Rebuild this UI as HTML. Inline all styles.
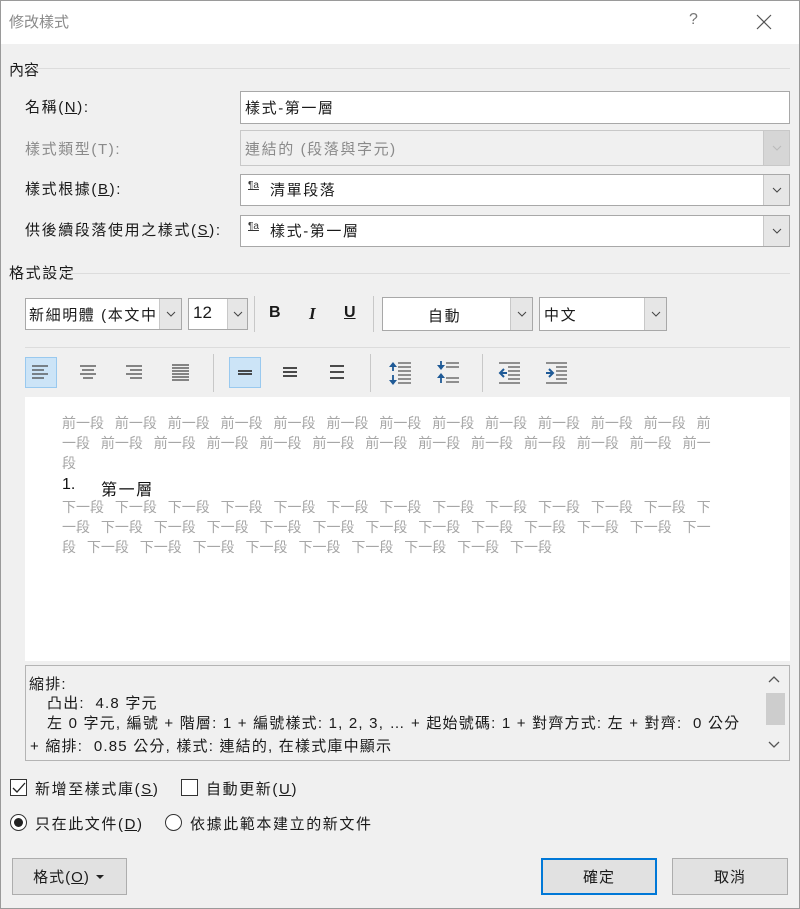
<!DOCTYPE html>
<html><head><meta charset="utf-8">
<style>
*{box-sizing:border-box;margin:0;padding:0}
body{width:800px;height:909px;background:#f0f0f0;font-family:"Liberation Sans","Noto Sans CJK TC",sans-serif;font-size:15px;color:#1a1a1a;position:relative;overflow:hidden}
.a{position:absolute;white-space:nowrap}
.ls{letter-spacing:1.6px}
.frame{position:absolute;left:0;top:0;width:800px;height:909px;border:1px solid #9a9a9a}
.title{position:absolute;left:1px;top:1px;width:798px;height:43px;background:#fff}
.line{position:absolute;height:1px;background:#dcdcdc}
.box{position:absolute;background:#fff;border:1px solid #a8a8a8}
.dd{position:absolute;top:0;right:0;bottom:0;width:26px;background:#e6e6e6;border-left:1px solid #c8c8c8;display:flex;align-items:center;justify-content:center}
.lbl{position:absolute;left:25px;line-height:20px;letter-spacing:1.6px;white-space:nowrap}
.u{text-decoration:underline}
.pv{font-size:14px;color:#a6a6a6;word-spacing:7px;line-height:20px}
.sep{position:absolute;width:1px;background:#c8c8c8}
.btn{position:absolute;background:#e1e1e1;border:1px solid #adadad;display:flex;align-items:center;justify-content:center;letter-spacing:1px}
.hl{position:absolute;background:#cce4f7;border:1px solid #99c9ef}
.ds{font-size:15px;letter-spacing:1.2px}
</style></head><body>
<div class="frame"></div>
<div class="title"></div>
<div class="a" style="left:9px;top:11px;color:#8a8a8a;font-size:15px">修改樣式</div>
<div class="a" style="left:689px;top:11px;color:#777;font-size:16px">?</div>
<svg class="a" style="left:756px;top:14px" width="16" height="16"><path d="M1 1L15 15M15 1L1 15" stroke="#555" stroke-width="1.2"/></svg>

<div class="a" style="left:9px;top:59px">內容</div>
<div class="line" style="left:36px;top:68px;width:754px"></div>

<div class="lbl" style="top:98px">名稱(<span class="u">N</span>):</div>
<div class="box" style="left:240px;top:91px;width:550px;height:33px"></div>
<div class="a ls" style="left:245px;top:97px">樣式-第一層</div>

<div class="lbl" style="top:140px;color:#8a8a8a">樣式類型(T):</div>
<div class="box" style="left:240px;top:130px;width:550px;height:36px;background:#f0f0f0;border-color:#c8c8c8"><div class="dd" style="background:#d6d6d6"><svg width="10" height="6"><path d="M1 1L5 5L9 1" stroke="#bbb" fill="none"/></svg></div></div>
<div class="a ls" style="left:245px;top:138px;color:#8a8a8a">連結的 (段落與字元)</div>

<div class="lbl" style="top:180px">樣式根據(<span class="u">B</span>):</div>
<div class="box" style="left:240px;top:174px;width:550px;height:32px"><div class="dd"><svg width="10" height="6"><path d="M1 1L5 5L9 1" stroke="#444" fill="none"/></svg></div></div>
<div class="a" style="left:248px;top:180px;font-size:10px;color:#333;text-decoration:underline">¶a</div>
<div class="a ls" style="left:270px;top:179px">清單段落</div>

<div class="lbl" style="top:221px">供後續段落使用之樣式(<span class="u">S</span>):</div>
<div class="box" style="left:240px;top:215px;width:550px;height:32px"><div class="dd"><svg width="10" height="6"><path d="M1 1L5 5L9 1" stroke="#444" fill="none"/></svg></div></div>
<div class="a" style="left:248px;top:221px;font-size:10px;color:#333;text-decoration:underline">¶a</div>
<div class="a ls" style="left:270px;top:220px">樣式-第一層</div>

<div class="a ls" style="left:9px;top:262px">格式設定</div>
<div class="line" style="left:62px;top:273px;width:728px"></div>

<div class="box" style="left:25px;top:298px;width:157px;height:32px;overflow:hidden"><div class="a ls" style="left:3px;top:5px">新細明體 (本文中</div><div class="dd" style="width:22px"><svg width="10" height="6"><path d="M1 1L5 5L9 1" stroke="#444" fill="none"/></svg></div></div>
<div class="box" style="left:188px;top:298px;width:60px;height:32px"><div class="dd" style="width:20px"><svg width="10" height="6"><path d="M1 1L5 5L9 1" stroke="#444" fill="none"/></svg></div></div>
<div class="a" style="left:193px;top:303px;font-size:17px">12</div>
<div class="sep" style="left:254px;top:296px;height:36px"></div>
<div class="a" style="left:269px;top:304px;font-weight:bold;font-size:16px">B</div>
<div class="a" style="left:309px;top:304px;font-weight:bold;font-style:italic;font-family:'Liberation Serif',serif;font-size:17px">I</div>
<div class="a" style="left:344px;top:304px;font-weight:bold;font-size:16px;text-decoration:underline">U</div>
<div class="sep" style="left:373px;top:296px;height:36px"></div>
<div class="box" style="left:382px;top:297px;width:151px;height:34px"><div class="dd" style="width:22px"><svg width="10" height="6"><path d="M1 1L5 5L9 1" stroke="#444" fill="none"/></svg></div></div>
<div class="a ls" style="left:428px;top:305px">自動</div>
<div class="box" style="left:539px;top:297px;width:128px;height:34px"><div class="dd" style="width:22px"><svg width="10" height="6"><path d="M1 1L5 5L9 1" stroke="#444" fill="none"/></svg></div></div>
<div class="a ls" style="left:544px;top:304px">中文</div>

<div class="line" style="left:25px;top:347px;width:765px"></div>

<div class="hl" style="left:25px;top:357px;width:32px;height:31px"></div>
<div class="hl" style="left:229px;top:357px;width:32px;height:31px"></div>
<svg class="a" style="left:0;top:350px" width="580" height="45">
<g stroke="#444" stroke-width="1.3">
<path d="M32 16H48M32 20H44M32 24H48M32 28H44"/>
<path d="M80 16H96M82 20H94M80 24H96M83 28H93"/>
<path d="M126 16H142M130 20H142M126 24H142M130 28H142"/>
<path d="M172 15H189M172 18H189M172 21H189M172 24H189M172 27H189M172 30H189"/>
</g>
<g stroke="#333" stroke-width="1.8">
<path d="M238 21H252M238 24H252"/>
<path d="M283 18H297M283 22H297M283 26H297"/>
<path d="M330 16H344M330 22H344M330 28H344"/>
</g>
<g stroke="#555" stroke-width="1.2"><path d="M398 13H411M398 17H411M398 21H411M398 25H411M398 29H411M398 33H411"/></g>
<g stroke="#1f5a96" stroke-width="1.8" fill="#1f5a96"><path d="M393 14V21M393 25V33" fill="none"/><path d="M389 17L393 12L397 17Z M389 30L393 35L397 30Z" stroke="none"/></g>
<g stroke="#555" stroke-width="1.2"><path d="M446 13H459M446 17H459M446 28H459M446 32H459"/></g>
<g stroke="#1f5a96" stroke-width="1.8" fill="#1f5a96"><path d="M441 11V17M441 26V33" fill="none"/><path d="M437 15L441 20L445 15Z M437 28L441 23L445 28Z" stroke="none"/></g>
<g stroke="#555" stroke-width="1.2"><path d="M499 13H520M508 17H520M508 21H520M508 25H520M508 29H520M499 33H520"/></g>
<g stroke="#1f5a96" stroke-width="2" fill="none"><path d="M500 23H507M504 19L500 23L504 27"/></g>
<g stroke="#555" stroke-width="1.2"><path d="M546 13H567M556 17H567M556 21H567M556 25H567M556 29H567M546 33H567"/></g>
<g stroke="#1f5a96" stroke-width="2" fill="none"><path d="M546 23H553M549 19L553 23L549 27"/></g>
</svg>
<div class="sep" style="left:213px;top:354px;height:38px"></div>
<div class="sep" style="left:370px;top:354px;height:38px"></div>
<div class="sep" style="left:482px;top:354px;height:38px"></div>

<div style="position:absolute;left:25px;top:397px;width:765px;height:264px;background:#fff"></div>
<div class="a pv" style="left:62px;top:413px">前一段 前一段 前一段 前一段 前一段 前一段 前一段 前一段 前一段 前一段 前一段 前一段 前</div>
<div class="a pv" style="left:62px;top:433px">一段 前一段 前一段 前一段 前一段 前一段 前一段 前一段 前一段 前一段 前一段 前一段 前一</div>
<div class="a pv" style="left:62px;top:453px">段</div>
<div class="a" style="left:62px;top:476px;font-size:16px;color:#111">1.</div>
<div class="a ls" style="left:101px;top:476px;font-size:16px;color:#111">第一層</div>
<div class="a pv" style="left:62px;top:497px">下一段 下一段 下一段 下一段 下一段 下一段 下一段 下一段 下一段 下一段 下一段 下一段 下</div>
<div class="a pv" style="left:62px;top:517px">一段 下一段 下一段 下一段 下一段 下一段 下一段 下一段 下一段 下一段 下一段 下一段 下一</div>
<div class="a pv" style="left:62px;top:537px">段 下一段 下一段 下一段 下一段 下一段 下一段 下一段 下一段 下一段</div>

<div class="box" style="left:25px;top:665px;width:765px;height:96px;background:#f0f0f0;border-color:#b4b4b4"></div>
<div class="a ds" style="left:29px;top:673px">縮排:</div>
<div class="a ds" style="left:47px;top:692px">凸出:&nbsp; 4.8 字元</div>
<div class="a ds" style="left:47px;top:712px">左 0 字元, 編號 + 階層: 1 + 編號樣式: 1, 2, 3, … + 起始號碼: 1 + 對齊方式: 左 + 對齊:&nbsp; 0 公分</div>
<div class="a ds" style="left:30px;top:735px">+ 縮排:&nbsp; 0.85 公分, 樣式: 連結的, 在樣式庫中顯示</div>
<div style="position:absolute;left:763px;top:666px;width:26px;height:94px;background:#f0f0f0"></div>
<div style="position:absolute;left:766px;top:693px;width:19px;height:32px;background:#cdcdcd"></div>
<svg class="a" style="left:768px;top:675px" width="12" height="8"><path d="M1 7L6 2L11 7" stroke="#555" fill="none" stroke-width="1.3"/></svg>
<svg class="a" style="left:768px;top:741px" width="12" height="8"><path d="M1 1L6 6L11 1" stroke="#555" fill="none" stroke-width="1.3"/></svg>

<div style="position:absolute;left:10px;top:779px;width:17px;height:17px;background:#fff;border:1px solid #333"></div>
<svg class="a" style="left:12px;top:782px" width="14" height="12"><path d="M1 6L5 10L13 1" stroke="#222" fill="none" stroke-width="1.3"/></svg>
<div class="a ls" style="left:35px;top:778px">新增至樣式庫(<span class="u">S</span>)</div>
<div style="position:absolute;left:181px;top:779px;width:17px;height:17px;background:#fff;border:1px solid #333"></div>
<div class="a ls" style="left:206px;top:778px">自動更新(<span class="u">U</span>)</div>

<div style="position:absolute;left:10px;top:814px;width:17px;height:17px;border-radius:50%;background:#fff;border:1px solid #333"></div>
<div style="position:absolute;left:14px;top:818px;width:9px;height:9px;border-radius:50%;background:#222"></div>
<div class="a ls" style="left:35px;top:813px">只在此文件(<span class="u">D</span>)</div>
<div style="position:absolute;left:165px;top:814px;width:17px;height:17px;border-radius:50%;background:#fff;border:1px solid #333"></div>
<div class="a ls" style="left:190px;top:813px">依據此範本建立的新文件</div>

<div class="btn" style="left:12px;top:858px;width:115px;height:37px"><span>格式(<span class="u">O</span>)</span><svg width="12" height="8" style="margin-left:4px"><path d="M2 2H10L6 6Z" fill="#222"/></svg></div>
<div class="btn" style="left:541px;top:858px;width:116px;height:37px;border:2px solid #0078d7">確定</div>
<div class="btn" style="left:672px;top:858px;width:116px;height:37px">取消</div>
</body></html>
